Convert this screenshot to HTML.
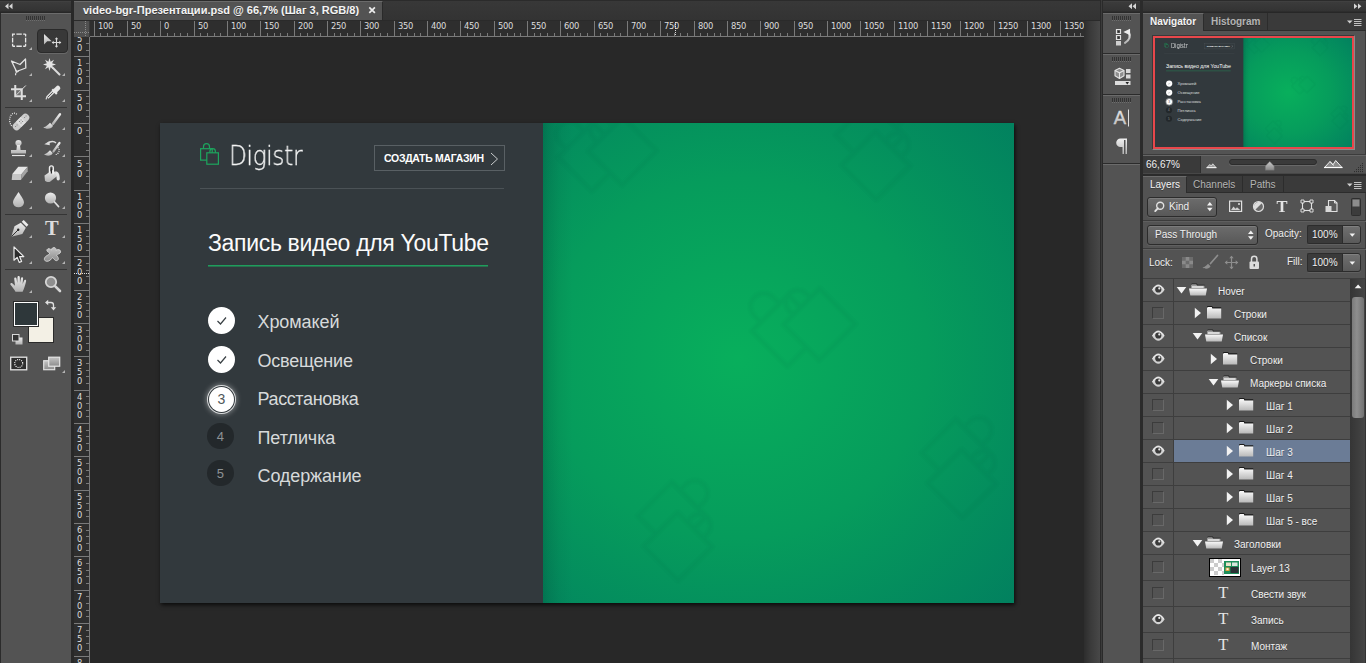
<!DOCTYPE html>
<html lang="ru">
<head>
<meta charset="utf-8">
<title>video-bgr-Презентации.psd @ 66,7% (Шаг 3, RGB/8)</title>
<style>
*{box-sizing:border-box;margin:0;padding:0}
html,body{width:1366px;height:663px;overflow:hidden;background:#282828}
body{position:relative;font-family:"Liberation Sans",sans-serif;font-size:11px;color:#ececec}
svg{display:block}
.a{position:absolute}
/* ---------- doc frame ---------- */
#gapL{position:absolute;left:71px;top:0;width:3px;height:663px;background:#282828}
#tabbar{position:absolute;left:74px;top:0;width:1026px;height:21px;background:linear-gradient(#383838,#333);border-top:1px solid #2b2b2b;border-bottom:1px solid #2a2a2a}
#tab{position:absolute;left:0;top:0;width:309px;height:19px;background:#535353;border-right:1px solid #2a2a2a;border-top:1px solid #6a6a6a}
#tab span{position:absolute;left:9px;top:1px;font:bold 11px/15px "Liberation Sans",sans-serif;color:#f4f4f4;white-space:nowrap;text-shadow:0 1px 0 rgba(0,0,0,.35)}
#tab i{position:absolute;left:294px;top:4px;width:9px;height:9px}
#hruler{position:absolute;left:90px;top:21px;width:994px;height:16px;background:#2e2e2e;overflow:hidden}
#vruler{position:absolute;left:74px;top:37px;width:16px;height:626px;background:#2e2e2e;overflow:hidden}
#corner{position:absolute;left:74px;top:21px;width:16px;height:16px;background:#505050;border-right:1px solid #3a3a3a}
#hruler text,#vruler text{font:9.3px "DejaVu Sans Condensed","Liberation Sans",sans-serif;fill:#dcdcdc;letter-spacing:-.3px}
#canvas{position:absolute;left:90px;top:37px;width:994px;height:626px;background:#282828;overflow:hidden}
#vscroll{position:absolute;left:1084px;top:21px;width:16px;height:642px;background:linear-gradient(90deg,#2d2d2d,#3a3a3a 40%,#484848)}
#gapR{position:absolute;left:1100px;top:0;width:3px;height:663px;background:linear-gradient(90deg,#2a2a2a 0 1px,#3b3b3b 1px 2px,#2a2a2a 2px 3px)}

/* ---------- left toolbar ---------- */
#tools{position:absolute;left:0;top:0;width:71px;height:663px;background:#535353;border-left:1px solid #2b2b2b}
#tools .hd{position:absolute;left:-1px;top:0;width:71px;height:13px;background:linear-gradient(#454545 0,#3b3b3b 1px,#333 10px,#272727 11px);border-top:1px solid #2b2b2b}
#tools .hl{position:absolute;left:0;top:13px;width:70px;height:1px;background:#6b6b6b}
#tools .sel{position:absolute;left:36px;top:29px;width:31px;height:24px;border-radius:4px;background:#383838;border:1px solid #2a2a2a;box-shadow:0 1px 0 #686868}
#tools .sep{position:absolute;left:4px;width:62px;height:1px;background:#353535}
#tools svg{position:absolute;left:-1px;top:0}
#tools .fg{position:absolute;left:12px;top:301px;width:26px;height:26px;border:1px solid #2b2b2b;background:#fff;padding:1px}
#tools .fg i{display:block;width:22px;height:22px;background:#2e373a;margin:0}
#tools .bg{position:absolute;left:27px;top:317px;width:26px;height:26px;border:1px solid #2b2b2b;background:#f3f0e5}

/* ---------- right icon strip ---------- */
#strip{position:absolute;left:1103px;top:0;width:37px;height:663px;background:#535353}
.dhd{position:absolute;left:0;top:0;width:100%;height:13px;background:linear-gradient(#454545 0,#3b3b3b 1px,#333 10px,#272727 11px);border-top:1px solid #2b2b2b}
#strip .g{position:absolute;left:0;width:37px;border-top:1px solid #6b6b6b;border-bottom:1px solid #2b2b2b;background:#535353}
#strip svg{position:absolute;left:0;top:0}
#gapR2{position:absolute;left:1140px;top:0;width:3px;height:663px;background:#2b2b2b}
/* ---------- right panels ---------- */
#rp{position:absolute;left:1143px;top:0;width:223px;height:663px;background:#535353;box-shadow:inset -1px 0 0 #3a3a3a;font:10px/12px "Liberation Sans",sans-serif;color:#f0f0f0}
#rp .t{position:absolute;white-space:nowrap;text-shadow:0 1px 0 rgba(0,0,0,.3)}
#rp .tabs{position:absolute;left:0;width:223px;height:18px;background:#3a3a3a;border-bottom:1px solid #2c2c2c}
#rp .tab{position:absolute;top:0;height:17px;border-right:1px solid #2c2c2c;font-weight:bold;color:#b4b4b4;padding:3px 0 0 7px;white-space:nowrap;text-shadow:0 1px 0 rgba(0,0,0,.3)}
#rp .tab.on{background:#535353;height:18px;color:#f4f4f4;border-top:1px solid #6b6b6b;padding-top:2px}
#rp .dd{position:absolute;border:1px solid #2c2c2c;border-radius:3px;background:linear-gradient(#6c6c6c,#585858);box-shadow:inset 0 1px 0 #7c7c7c,0 1px 0 #606060}
#rp .fld{position:absolute;background:#3a3a3a;border:1px solid #2c2c2c;border-right:0;border-radius:2px 0 0 2px;box-shadow:0 1px 0 #606060}
#rp .fbtn{position:absolute;border:1px solid #2c2c2c;border-radius:0 3px 3px 0;background:linear-gradient(#707070,#5a5a5a);box-shadow:inset 0 1px 0 #808080,0 1px 0 #606060}
#rp .ln{position:absolute;left:0;width:223px;height:2px;border-top:1px solid #3c3c3c;border-bottom:1px solid #5f5f5f}
#rp svg.ov{position:absolute;left:0;top:0}
#lay{position:absolute;left:0;top:278px;width:208px;height:385px;overflow:hidden}
#lay .r{position:absolute;left:0;width:208px;border-top:1px solid #3e3e3e}
#lay .r.s:before{content:"";position:absolute;left:31px;right:0;top:0;bottom:0;background:#6b7c96}
#lay .ec{position:absolute;left:30px;top:0;width:1px;height:385px;background:#3e3e3e}
#lay .cb{position:absolute;left:9px;width:12px;height:12px;border:1px solid #3c3c3c;border-right-color:#686868;border-bottom-color:#686868}
#lay .nm{position:absolute;white-space:nowrap;text-shadow:0 1px 0 rgba(0,0,0,.3)}
#lsb{position:absolute;left:207px;top:278px;width:16px;height:385px;background:linear-gradient(90deg,#353535,#454545);border-right:1px solid #333;border-top:1px solid #3e3e3e}
#lsb i{position:absolute;left:2px;top:18px;width:12px;height:121px;border-radius:3px;background:linear-gradient(90deg,#7a7a7a,#8e8e8e 40%,#727272)}
/* navigator */
#nav{position:absolute;left:9px;top:35px;width:203px;height:115px;background:#e8474b;border:1px solid #3a3a3a;border-right-color:#8a8a8a;border-bottom-color:#8a8a8a;box-shadow:0 0 0 0 #000}
#nav .vp{position:absolute;left:2px;top:2px;width:197px;height:109px;overflow:hidden;background:#32393d}
#nav .vp .doc{left:0;top:0;transform:scale(.2307);transform-origin:0 0;box-shadow:none}

/* ---------- document ---------- */
.doc{position:absolute;left:70px;top:86px;width:854px;height:480px;background:#32393d;box-shadow:1px 2px 4px rgba(0,0,0,.75);font-family:"Liberation Sans",sans-serif}
.green{position:absolute;left:383px;top:0;width:471px;height:480px;background:linear-gradient(90deg,rgba(0,50,40,.24),rgba(0,50,40,.15) 6px,rgba(0,50,40,.06) 16px,rgba(0,50,40,0) 30px),radial-gradient(ellipse 380px 360px at 195px 235px,#08af5c 0%,#069c5c 50%,#02805f 100%)}

.doc .logo{position:absolute;left:38px;top:18px}
.doc .brand{position:absolute;left:69.3px;top:12.7px;font:200 26.5px/40px "DejaVu Sans Light","DejaVu Sans","Liberation Sans",sans-serif;color:#f4f5f5;white-space:nowrap;transform-origin:0 50%;transform:scaleX(.872);will-change:transform;letter-spacing:-.3px;-webkit-text-stroke:.3px #f4f5f5}
.doc .btn{position:absolute;left:214px;top:22px;width:131px;height:26px;border:1px solid #596064;color:#fff;font:bold 10.5px/24px "Liberation Sans",sans-serif;padding-left:9px;white-space:nowrap;letter-spacing:-.3px}
.doc .btn svg{position:absolute;left:115px;top:6px}
.doc .hr{position:absolute;left:40px;top:65px;width:304px;height:1px;background:#4b5256}
.doc h1{position:absolute;left:48px;top:104.5px;font:normal 23px/30px "Liberation Sans",sans-serif;color:#fbfbfb;white-space:nowrap;letter-spacing:-.32px}
.doc .ul{position:absolute;left:48px;top:142px;width:280px;height:2px;background:linear-gradient(#1f9d5c 0 1px,rgba(31,157,92,.55) 1px 2px)}
.doc .mk{position:absolute;width:27px;height:27px;border-radius:50%;background:#fff;font:normal 14px/27px "Liberation Sans",sans-serif;color:#50575b;text-align:center}
.doc .mk.d{background:#23282b;color:#8d9295;font-size:13px;width:26.6px;height:26.6px}
.doc .mk.g{width:25px;height:25px;margin:1px;line-height:25px;box-shadow:0 0 0 1px #32393d,0 0 0 2px #d8dadb,0 0 5px 3px rgba(255,255,255,.35)}
.doc .lt{position:absolute;left:97.5px;font:normal 18px/27px "Liberation Sans",sans-serif;color:#d7dadb;white-space:nowrap}
.green svg{position:absolute;left:0;top:0}

</style>
</head>
<body>
<div id="tools">
<div class="hd"></div><div class="hl"></div>
<div class="sel"></div>
<div class="sep" style="top:107px"></div><div class="sep" style="top:214px"></div><div class="sep" style="top:269px"></div>
<div class="bg"></div><div class="fg"><i></i></div>
<svg width="72" height="380" viewBox="0 0 72 380">
<defs>
<linearGradient id="ig" x1="0" y1="0" x2="0" y2="1"><stop offset="0" stop-color="#ececec"/><stop offset="1" stop-color="#b2b2b2"/></linearGradient>
<linearGradient id="ig2" x1="0" y1="0" x2="0" y2="1"><stop offset="0" stop-color="#c4c4c4"/><stop offset="1" stop-color="#8c8c8c"/></linearGradient>
</defs>
<!-- collapse arrows -->
<path d="M8.5 3.2v6L5 6.2zM12.5 3.2v6L9 6.2z" fill="#d6d6d6"/>
<!-- grip -->
<path d="M26.5 16v4M28.5 16v4M30.5 16v4M32.5 16v4M34.5 16v4M36.5 16v4M38.5 16v4M40.5 16v4M42.5 16v4M44.5 16v4" stroke="#333" stroke-width="1"/>
<path d="M26 20.5h19" stroke="#6e6e6e" stroke-width="1" stroke-dasharray="1 1"/>
<!-- corner triangles -->
<path d="M32 47v3h-3z" fill="#b4b4b4"/><path d="M32 73v3h-3z" fill="#b4b4b4"/><path d="M65 73v3h-3z" fill="#b4b4b4"/><path d="M32 99v3h-3z" fill="#b4b4b4"/><path d="M65 99v3h-3z" fill="#b4b4b4"/>
<path d="M32 127v3h-3z" fill="#b4b4b4"/><path d="M65 127v3h-3z" fill="#b4b4b4"/><path d="M32 154v3h-3z" fill="#b4b4b4"/><path d="M65 154v3h-3z" fill="#b4b4b4"/>
<path d="M32 180v3h-3z" fill="#b4b4b4"/><path d="M65 180v3h-3z" fill="#b4b4b4"/><path d="M32 206v3h-3z" fill="#b4b4b4"/><path d="M65 206v3h-3z" fill="#b4b4b4"/>
<path d="M32 235v3h-3z" fill="#b4b4b4"/><path d="M65 235v3h-3z" fill="#b4b4b4"/><path d="M32 261v3h-3z" fill="#b4b4b4"/><path d="M65 261v3h-3z" fill="#b4b4b4"/>
<path d="M32 290v3h-3z" fill="#b4b4b4"/><path d="M65 370v3h-3z" fill="#b4b4b4"/>
<!-- marquee -->
<rect x="12.6" y="34.05" width="13" height="12.2" fill="none" stroke="#e8e8e8" stroke-width="1.3" stroke-dasharray="2.4 1.4 5.4 1.4 2.400 0 2.400 1.400 4.600 1.400 2.400 0"/>
<!-- move -->
<path d="M44 34v10.6l3.2-3.4h4.5z" fill="url(#ig)"/>
<path d="M56.500 38v9M52 42.500h9" stroke="#d8d8d8" stroke-width="1.100" fill="none"/>
<path d="M54.800 39.200l1.700-2 1.700 2zM54.800 45.800l1.700 2 1.700-2zM53.700 40.800l-2 1.700 2 1.700zM59.300 40.800l2 1.700-2 1.700z" fill="#d8d8d8"/>
<!-- polygonal lasso -->
<path d="M11.5 61l8.5 3.5 5.5-5.5.3 9-9.3 3.5z" fill="none" stroke="#e2e2e2" stroke-width="1.3" stroke-linejoin="round"/>
<path d="M18.5 70.2a1.4 1.4 0 1 1-2.6-.4M17 71.3c-1 1.6-2 2.6-1.3 4" fill="none" stroke="#e2e2e2" stroke-width="1.1"/>
<!-- magic wand -->
<path d="M49.5 58l1.1 3.8 3.4-2-1.9 3.5 3.9 1.2-3.9 1.2 1.9 3.5-3.4-2-1.1 3.8-1.100-3.8-3.4 2 1.900-3.5-3.900-1.200 3.900-1.200-1.900-3.500 3.400 2z" fill="#e4e4e4"/>
<path d="M52.500 67.500l7 7" stroke="#dcdcdc" stroke-width="2" stroke-linecap="round"/>
<!-- crop -->
<rect x="16.500" y="90.500" width="4.500" height="4.500" fill="#707070"/>
<path d="M15.250 85v11.250H26M11 89.250h10.750V100" fill="none" stroke="#dedede" stroke-width="2"/>
<path d="M16.500 94.800l9.300-9.300" stroke="#dedede" stroke-width="1"/>
<!-- eyedropper -->
<path d="M46.100 99.400l.8-2.600" stroke="#dcdcdc" stroke-width="1.200"/><path d="M47.300 97.700l6.700-6.700" stroke="#dcdcdc" stroke-width="3.200"/><path d="M47.600 97.400l5.200-5.200" stroke="#4a4a4a" stroke-width=".9"/>
<path d="M52.300 89.300l4.600 4.600" stroke="#e8e8e8" stroke-width="2.200"/><path d="M55.600 90.400l2.300-2.300" stroke="#e8e8e8" stroke-width="4.800" stroke-linecap="round"/>
<!-- healing brush -->
<rect x="11" y="118.200" width="20" height="7.600" rx="3.600" transform="rotate(-45 21 122)" fill="#cdcdcd"/>
<rect x="17.700" y="118.200" width="6.600" height="7.600" transform="rotate(-45 21 122)" fill="#dedede"/>
<path d="M19.500 121.500h.1M21 120h.1M22.500 121.500h.1M21 123h.1M24.500 117.500h.1M26 116h.1M15.500 126.500h.1M17 125h.1" stroke="#8a8a8a" stroke-width="1" stroke-linecap="square"/>
<path d="M16.800 114.300a4.200 6.300 0 0 0-5 11.700" fill="none" stroke="#f0f0f0" stroke-width="1.200" stroke-dasharray="1 1.100"/>
<!-- brush -->
<path d="M60 114.300l-7 9.500" stroke="url(#ig)" stroke-width="2.400" stroke-linecap="round"/>
<path d="M43.300 127.300c3-.3 4.700-2.800 6.700-4.500l3 3c-.9 3.200-6.600 4-9.700 1.500z" fill="url(#ig)"/>
<!-- stamp -->
<circle cx="18.500" cy="143" r="3.100" fill="url(#ig)"/><path d="M17 145h3l.6 5h5.400v3.600H11V150h5.400z" fill="url(#ig)"/><path d="M12 155.500h13" stroke="#e6e6e6" stroke-width="1.200"/>
<!-- history brush -->
<path d="M59.500 143l-6 8.300" stroke="url(#ig)" stroke-width="2.200" stroke-linecap="round"/>
<path d="M44 154.300c2.700-.3 4.200-2.500 6-4l2.700 2.700c-.8 2.900-5.900 3.600-8.700 1.300z" fill="url(#ig)"/>
<path d="M48 143.300c2.500-2.200 6-2.300 8-.3" fill="none" stroke="#dcdcdc" stroke-width="1.500"/><path d="M44.300 144.300l5.200-3.300.3 4.300z" fill="#dcdcdc"/>
<path d="M57.800 147.500a4 4 0 0 1-2.300 7" fill="none" stroke="#f0f0f0" stroke-width="1.200" stroke-dasharray="1 1"/>
<!-- eraser -->
<path d="M18.300 166.700h9.400l-6 7.300h-9.400z" fill="#e6e6e6"/><path d="M12.300 174h9.400l-.8 6h-9.200z" fill="#c6c6c6"/><path d="M21.700 174l6-7.300v4.500l-6.800 8.800z" fill="#a4a4a4"/>
<!-- bucket -->
<path d="M44.500 175.500l8-5.500 6 5-8.500 6.800c-1.500.5-3.800.2-5-1z" fill="url(#ig)"/>
<path d="M49.500 173v-5.200a1.900 1.900 0 0 1 3.800 0v6.500" fill="none" stroke="#efefef" stroke-width="1.400"/><path d="M51.400 168.500v5" stroke="#2c2c2c" stroke-width="1.200"/>
<path d="M54.500 171.800c3.200-1 5.200 1 5.300 7a1.600 1.600 0 0 1-3.200 0c0-3-.3-5.500-2.100-7z" fill="#e2e2e2"/>
<!-- blur -->
<path d="M18.500 192c1.500 2.700 5.500 7.200 5.500 10.500a5.500 4.800 0 0 1-11 0c0-3.300 4-7.800 5.500-10.500z" fill="url(#ig)"/>
<!-- dodge -->
<circle cx="50.500" cy="198" r="5.600" fill="url(#ig)"/><path d="M54.500 202l4 4.500" stroke="#e0e0e0" stroke-width="1.800" stroke-linecap="round"/>
<!-- pen -->
<path d="M11.300 236.700l3.200-10.400 6.300-3.500 5 5-3.500 6.300z" fill="url(#ig)"/><path d="M21.700 221.800l2-1.800 4.700 4.700-1.800 2z" fill="#ececec"/>
<path d="M11.500 236.500l6.500-6.500" stroke="#333" stroke-width="1"/><circle cx="18.200" cy="229.800" r="1.200" fill="#222"/>
<!-- type -->
<text x="45" y="235.200" font-family="Liberation Serif,serif" font-size="20.500" font-weight="bold" fill="#dcdcdc">T</text>
<!-- path select -->
<path d="M14 246.800v13.400l3.200-2.800 2 5 2.400-1-2-4.800h4.200z" fill="#2b2b2b" stroke="#ececec" stroke-width="1.200" stroke-linejoin="round"/>
<!-- custom shape -->
<path d="M52.500 248c2-1.500 4 .3 3.300 2.300 1.800-1.300 5-.8 4.800 1.500-.2 2-3 2.200-4.300 3.200 1.300 1.300 3 3.800 1.300 5.200-2 1.500-3.500-1.200-5-2.500-1.500 1.300-3.500 4.300-6.500 3.500-2.800-1-1.800-3.800 0-5 1.800-1.300 3.300-1.800 3.700-3.200-1.300-.8-3.500-1.500-2.800-3.300.8-1.800 3.300-.8 4.500.3.200-.8.200-1.500 1-2z" fill="url(#ig2)" stroke="#d2d2d2" stroke-width="1"/>
<!-- hand -->
<path d="M15.500 291.800c-1.500-2.500-3.500-5.500-5-7-.8-1.300.8-2.300 2-1.300l2.500 2.300-.8-7c0-1.500 2-1.700 2.300-.2l.8 4.500.2-6c0-1.500 2.200-1.500 2.300 0l.2 6 1-5c.3-1.300 2.200-1 2.100.4l-.5 5.400 1.500-3.400c.6-1.200 2.300-.6 2 .7-.8 3.800-2 7.500-3.500 10.600z" fill="url(#ig)"/>
<!-- zoom -->
<circle cx="51" cy="282" r="5.200" fill="#8f8f8f" stroke="#d6d6d6" stroke-width="1.800"/><path d="M55.300 286.300l4.700 4.700" stroke="#d6d6d6" stroke-width="2.600" stroke-linecap="round"/>
<!-- swap -->
<path d="M47.500 302.500h3.500a2.500 2.500 0 0 1 2.500 2.500v3" fill="none" stroke="#e0e0e0" stroke-width="1.300"/><path d="M45 302.500l3.200-2.700v5.400zM53.500 310.500l-2.700-3.200h5.400z" fill="#e0e0e0"/>
<!-- default colours -->
<rect x="15.500" y="337.500" width="7" height="7" fill="url(#ig)"/><rect x="12.500" y="334.500" width="6.500" height="6.500" fill="#333" stroke="#d8d8d8" stroke-width="1"/>
<!-- quick mask -->
<rect x="10.700" y="357.200" width="16" height="12.600" fill="#2e2e2e" stroke="#e4e4e4" stroke-width="1.300"/><circle cx="18.700" cy="363.500" r="4" fill="none" stroke="#fff" stroke-width="1.200" stroke-dasharray="1 1.100"/>
<!-- screen mode -->
<rect x="43.700" y="360.700" width="11" height="9" fill="url(#ig2)" stroke="#e0e0e0" stroke-width="1.200"/><rect x="48.700" y="357.200" width="11" height="9" fill="url(#ig2)" stroke="#e6e6e6" stroke-width="1.200"/>
</svg>
</div>

<div id="gapL"></div>
<div id="tabbar"><div id="tab"><span>video-bgr-Презентации.psd @ 66,7% (Шаг 3, RGB/8)</span><i><svg width="9" height="9" viewBox="0 0 9 9"><path d="M1.300 1.300l5.600 5.600M6.900 1.300l-5.600 5.600" stroke="#ececec" stroke-width="1.700" fill="none"/></svg></i></div></div>
<div id="hruler"><svg width="994" height="16" viewBox="0 0 994 16"><text x="-26" y="8.2">150</text><text x="8" y="8.2">100</text><text x="41" y="8.2">50</text><text x="74" y="8.2">0</text><text x="108" y="8.2">50</text><text x="141" y="8.2">100</text><text x="174" y="8.2">150</text><text x="208" y="8.2">200</text><text x="241" y="8.2">250</text><text x="274" y="8.2">300</text><text x="308" y="8.2">350</text><text x="341" y="8.2">400</text><text x="374" y="8.2">450</text><text x="408" y="8.2">500</text><text x="441" y="8.2">550</text><text x="474" y="8.2">600</text><text x="508" y="8.2">650</text><text x="541" y="8.2">700</text><text x="574" y="8.2">750</text><text x="608" y="8.2">800</text><text x="641" y="8.2">850</text><text x="674" y="8.2">900</text><text x="708" y="8.2">950</text><text x="741" y="8.2">1000</text><text x="774" y="8.2">1050</text><text x="808" y="8.2">1100</text><text x="841" y="8.2">1150</text><text x="874" y="8.2">1200</text><text x="908" y="8.2">1250</text><text x="941" y="8.2">1300</text><text x="974" y="8.2">1350</text><path d="M4.5 0V15M10.5 12V15M17.5 12V15M24.5 12V15M30.5 12V15M37.5 0V15M44.5 12V15M50.5 12V15M57.5 12V15M64.5 12V15M70.5 0V15M77.5 12V15M84.5 12V15M90.5 12V15M97.5 12V15M104.5 0V15M110.5 12V15M117.5 12V15M124.5 12V15M130.5 12V15M137.5 0V15M144.5 12V15M150.5 12V15M157.5 12V15M164.5 12V15M170.5 0V15M177.5 12V15M184.5 12V15M190.5 12V15M197.5 12V15M204.5 0V15M210.5 12V15M217.5 12V15M224.5 12V15M230.5 12V15M237.5 0V15M244.5 12V15M250.5 12V15M257.5 12V15M264.5 12V15M270.5 0V15M277.5 12V15M284.5 12V15M290.5 12V15M297.5 12V15M304.5 0V15M310.5 12V15M317.5 12V15M324.5 12V15M330.5 12V15M337.5 0V15M344.5 12V15M350.5 12V15M357.5 12V15M364.5 12V15M370.5 0V15M377.5 12V15M384.5 12V15M390.5 12V15M397.5 12V15M404.5 0V15M410.5 12V15M417.5 12V15M424.5 12V15M430.5 12V15M437.5 0V15M444.5 12V15M450.5 12V15M457.5 12V15M464.5 12V15M470.5 0V15M477.5 12V15M484.5 12V15M490.5 12V15M497.5 12V15M504.5 0V15M510.5 12V15M517.5 12V15M524.5 12V15M530.5 12V15M537.5 0V15M544.5 12V15M550.5 12V15M557.5 12V15M564.5 12V15M570.5 0V15M577.5 12V15M584.5 12V15M590.5 12V15M597.5 12V15M604.5 0V15M610.5 12V15M617.5 12V15M624.5 12V15M630.5 12V15M637.5 0V15M644.5 12V15M650.5 12V15M657.5 12V15M664.5 12V15M670.5 0V15M677.5 12V15M684.5 12V15M690.5 12V15M697.5 12V15M704.5 0V15M710.5 12V15M717.5 12V15M724.5 12V15M730.5 12V15M737.5 0V15M744.5 12V15M750.5 12V15M757.5 12V15M764.5 12V15M770.5 0V15M777.5 12V15M784.5 12V15M790.5 12V15M797.5 12V15M804.5 0V15M810.5 12V15M817.5 12V15M824.5 12V15M830.5 12V15M837.5 0V15M844.5 12V15M850.5 12V15M857.5 12V15M864.5 12V15M870.5 0V15M877.5 12V15M884.5 12V15M890.5 12V15M897.5 12V15M904.5 0V15M910.5 12V15M917.5 12V15M924.5 12V15M930.5 12V15M937.5 0V15M944.5 12V15M950.5 12V15M957.5 12V15M964.5 12V15M970.5 0V15M977.5 12V15M984.5 12V15M990.5 12V15M0 15.5H994" stroke="#7a7a7a" stroke-width="1" fill="none"/><path d="M585.5 1V15" stroke="#e0e0e0" stroke-width="1" stroke-dasharray="1 1"/></svg></div>
<div id="vruler"><svg width="16" height="626" viewBox="0 0 16 626"><text x="5.6" y="-4" text-anchor="middle">1</text><text x="5.6" y="5" text-anchor="middle">5</text><text x="5.6" y="14" text-anchor="middle">0</text><text x="5.6" y="29" text-anchor="middle">1</text><text x="5.6" y="38" text-anchor="middle">0</text><text x="5.6" y="47" text-anchor="middle">0</text><text x="5.6" y="64" text-anchor="middle">5</text><text x="5.6" y="74" text-anchor="middle">0</text><text x="5.6" y="97" text-anchor="middle">0</text><text x="5.6" y="130" text-anchor="middle">5</text><text x="5.6" y="140" text-anchor="middle">0</text><text x="5.6" y="163" text-anchor="middle">1</text><text x="5.6" y="172" text-anchor="middle">0</text><text x="5.6" y="181" text-anchor="middle">0</text><text x="5.6" y="196" text-anchor="middle">1</text><text x="5.6" y="205" text-anchor="middle">5</text><text x="5.6" y="214" text-anchor="middle">0</text><text x="5.6" y="229" text-anchor="middle">2</text><text x="5.6" y="238" text-anchor="middle">0</text><text x="5.6" y="247" text-anchor="middle">0</text><text x="5.6" y="263" text-anchor="middle">2</text><text x="5.6" y="272" text-anchor="middle">5</text><text x="5.6" y="281" text-anchor="middle">0</text><text x="5.6" y="296" text-anchor="middle">3</text><text x="5.6" y="305" text-anchor="middle">0</text><text x="5.6" y="314" text-anchor="middle">0</text><text x="5.6" y="329" text-anchor="middle">3</text><text x="5.6" y="338" text-anchor="middle">5</text><text x="5.6" y="347" text-anchor="middle">0</text><text x="5.6" y="363" text-anchor="middle">4</text><text x="5.6" y="372" text-anchor="middle">0</text><text x="5.6" y="381" text-anchor="middle">0</text><text x="5.6" y="396" text-anchor="middle">4</text><text x="5.6" y="405" text-anchor="middle">5</text><text x="5.6" y="414" text-anchor="middle">0</text><text x="5.6" y="429" text-anchor="middle">5</text><text x="5.6" y="438" text-anchor="middle">0</text><text x="5.6" y="447" text-anchor="middle">0</text><text x="5.6" y="463" text-anchor="middle">5</text><text x="5.6" y="472" text-anchor="middle">5</text><text x="5.6" y="481" text-anchor="middle">0</text><text x="5.6" y="496" text-anchor="middle">6</text><text x="5.6" y="505" text-anchor="middle">0</text><text x="5.6" y="514" text-anchor="middle">0</text><text x="5.6" y="529" text-anchor="middle">6</text><text x="5.6" y="538" text-anchor="middle">5</text><text x="5.6" y="547" text-anchor="middle">0</text><text x="5.6" y="563" text-anchor="middle">7</text><text x="5.6" y="572" text-anchor="middle">0</text><text x="5.6" y="581" text-anchor="middle">0</text><text x="5.6" y="596" text-anchor="middle">7</text><text x="5.6" y="605" text-anchor="middle">5</text><text x="5.6" y="614" text-anchor="middle">0</text><text x="5.6" y="629" text-anchor="middle">8</text><text x="5.6" y="638" text-anchor="middle">0</text><text x="5.6" y="647" text-anchor="middle">0</text><path d="M12 6.5H15M12 13.5H15M0 19.5H15M12 26.5H15M12 33.5H15M12 39.5H15M12 46.5H15M0 53.5H15M12 59.5H15M12 66.5H15M12 73.5H15M12 79.5H15M0 86.5H15M12 93.5H15M12 99.5H15M12 106.5H15M12 113.5H15M0 119.5H15M12 126.5H15M12 133.5H15M12 139.5H15M12 146.5H15M0 153.5H15M12 159.5H15M12 166.5H15M12 173.5H15M12 179.5H15M0 186.5H15M12 193.5H15M12 199.5H15M12 206.5H15M12 213.5H15M0 219.5H15M12 226.5H15M12 233.5H15M12 239.5H15M12 246.5H15M0 253.5H15M12 259.5H15M12 266.5H15M12 273.5H15M12 279.5H15M0 286.5H15M12 293.5H15M12 299.5H15M12 306.5H15M12 313.5H15M0 319.5H15M12 326.5H15M12 333.5H15M12 339.5H15M12 346.5H15M0 353.5H15M12 359.5H15M12 366.5H15M12 373.5H15M12 379.5H15M0 386.5H15M12 393.5H15M12 399.5H15M12 406.5H15M12 413.5H15M0 419.5H15M12 426.5H15M12 433.5H15M12 439.5H15M12 446.5H15M0 453.5H15M12 459.5H15M12 466.5H15M12 473.5H15M12 479.5H15M0 486.5H15M12 493.5H15M12 499.5H15M12 506.5H15M12 513.5H15M0 519.5H15M12 526.5H15M12 533.5H15M12 539.5H15M12 546.5H15M0 553.5H15M12 559.5H15M12 566.5H15M12 573.5H15M12 579.5H15M0 586.5H15M12 593.5H15M12 599.5H15M12 606.5H15M12 613.5H15M0 619.5H15M15.5 0V626" stroke="#7a7a7a" stroke-width="1" fill="none"/><path d="M0 236.5H15" stroke="#e0e0e0" stroke-width="1" stroke-dasharray="1 1"/></svg></div>
<div id="corner"><svg width="16" height="16" viewBox="0 0 16 16"><path d="M11.5 0V16M0 11.5H15" stroke="#8a8a8a" stroke-width="1" stroke-dasharray="1 1" fill="none"/></svg></div>
<div id="canvas">
  <div class="doc">
    <div class="green"><svg width="471" height="480" viewBox="0 0 471 480" fill="none" stroke="#0a5f45" stroke-width=".9" opacity=".065"><filter id="wb"><feGaussianBlur stdDeviation="1.3"/></filter><g filter="url(#wb)"><g transform="translate(59,23) rotate(-45) scale(4.2)"><path d="M-6.500 -5.500v-2a3 3 0 0 1 6 0v2"/><path d="M-3.200 5.900H-9.300V-5.500H2.300V-1.400"/><path d="M-.100 -1.400v-1.350a2.750 2.750 0 0 1 5.500 0v1.350"/><rect x="-3.200" y="-1.400" width="11.600" height="11.400"/></g><g transform="translate(338,22) rotate(45) scale(4.2)"><path d="M-6.500 -5.500v-2a3 3 0 0 1 6 0v2"/><path d="M-3.200 5.900H-9.300V-5.500H2.300V-1.400"/><path d="M-.100 -1.400v-1.350a2.750 2.750 0 0 1 5.500 0v1.350"/><rect x="-3.200" y="-1.400" width="11.600" height="11.400"/></g><g transform="translate(255,196) rotate(-45) scale(4.4)"><path d="M-6.500 -5.500v-2a3 3 0 0 1 6 0v2"/><path d="M-3.200 5.900H-9.300V-5.500H2.300V-1.400"/><path d="M-.100 -1.400v-1.350a2.750 2.750 0 0 1 5.500 0v1.350"/><rect x="-3.200" y="-1.400" width="11.600" height="11.400"/></g><g transform="translate(140,403) rotate(45) scale(4.2)"><path d="M-6.500 -5.500v-2a3 3 0 0 1 6 0v2"/><path d="M-3.200 5.900H-9.300V-5.500H2.300V-1.400"/><path d="M-.100 -1.400v-1.350a2.750 2.750 0 0 1 5.500 0v1.350"/><rect x="-3.200" y="-1.400" width="11.600" height="11.400"/></g><g transform="translate(424,340) rotate(45) scale(4.2)"><path d="M-6.500 -5.500v-2a3 3 0 0 1 6 0v2"/><path d="M-3.200 5.900H-9.300V-5.500H2.300V-1.400"/><path d="M-.100 -1.400v-1.350a2.750 2.750 0 0 1 5.500 0v1.350"/><rect x="-3.200" y="-1.400" width="11.600" height="11.400"/></g></g></svg></div>
    <svg class="logo" width="24" height="26" viewBox="0 0 24 26" fill="none" stroke="#1da55e" stroke-width="1.2">
      <path d="M5.5 7.7V5.7a3 3 0 0 1 6 0v2"/><rect x="2.6" y="7.7" width="11.6" height="11.4"/>
      <rect x="8.8" y="11.8" width="11.6" height="11.4" fill="#32393d"/><path d="M11.9 11.8V10.45a2.75 2.75 0 0 1 5.5 0v1.35"/>
    </svg>
    <div class="brand">Digistr</div>
    <div class="btn">СОЗДАТЬ МАГАЗИН<svg width="9" height="14" viewBox="0 0 9 14" fill="none" stroke="#c9cccd" stroke-width="1"><path d="M1 1l6.5 6L1 13"/></svg></div>
    <div class="hr"></div>
    <h1>Запись видео для YouTube</h1>
    <div class="ul"></div>
    <b class="mk " style="left:48.0px;top:184.3px"><svg width="27" height="27" viewBox="0 0 27 27" fill="none" stroke="#3a4145" stroke-width="1.2"><path d="M9.5 14l3 3 5.5-6.5"/></svg></b><span class="lt" style="top:186.2px;letter-spacing:-0.08px">Хромакей</span>
    <b class="mk " style="left:48.0px;top:222.9px"><svg width="27" height="27" viewBox="0 0 27 27" fill="none" stroke="#3a4145" stroke-width="1.2"><path d="M9.5 14l3 3 5.5-6.5"/></svg></b><span class="lt" style="top:224.6px;letter-spacing:-0.2px">Освещение</span>
    <b class="mk g" style="left:48.0px;top:262.7px">3</b><span class="lt" style="top:263.1px;letter-spacing:-0.39px">Расстановка</span>
    <b class="mk d" style="left:47.1px;top:299.8px">4</b><span class="lt" style="top:301.6px;letter-spacing:-0.08px">Петличка</span>
    <b class="mk d" style="left:47.1px;top:336.6px">5</b><span class="lt" style="top:340.0px;letter-spacing:-0.12px">Содержание</span>
  </div>
</div>
<div id="vscroll"></div>
<div id="gapR"></div>
<div id="strip"><div class="dhd"></div>
<div class="g" style="top:13px;height:41px"></div><div class="g" style="top:54px;height:41px"></div><div class="g" style="top:95px;height:69px"></div><div class="g" style="top:164px;height:499px;border-bottom:0"></div>
<svg width="37" height="170" viewBox="1103 0 37 170">
<defs><linearGradient id="sg" x1="0" y1="0" x2="0" y2="1"><stop offset="0" stop-color="#f0f0f0"/><stop offset="1" stop-color="#b4b4b4"/></linearGradient></defs>
<path d="M1132 3.200v6l-3.500-3zM1136 3.200v6l-3.500-3z" fill="#d6d6d6"/>
<path d="M1112.5 16v4M1114.5 16v4M1116.5 16v4M1118.5 16v4M1120.5 16v4M1122.5 16v4M1124.5 16v4M1126.5 16v4M1128.5 16v4M1130.5 16v4" stroke="#333" stroke-width="1"/><path d="M1112 20.5h19" stroke="#6e6e6e" stroke-width="1" stroke-dasharray="1 1"/><path d="M1112.5 57v4M1114.5 57v4M1116.5 57v4M1118.5 57v4M1120.5 57v4M1122.5 57v4M1124.5 57v4M1126.5 57v4M1128.5 57v4M1130.5 57v4" stroke="#333" stroke-width="1"/><path d="M1112 61.5h19" stroke="#6e6e6e" stroke-width="1" stroke-dasharray="1 1"/><path d="M1112.5 98v4M1114.5 98v4M1116.5 98v4M1118.5 98v4M1120.5 98v4M1122.5 98v4M1124.5 98v4M1126.5 98v4M1128.5 98v4M1130.5 98v4" stroke="#333" stroke-width="1"/><path d="M1112 102.5h19" stroke="#6e6e6e" stroke-width="1" stroke-dasharray="1 1"/>
<!-- history -->
<path d="M1116.500 29.500h4v4h-4zM1116.500 35.500h4v4h-4z" fill="none" stroke="#e2e2e2" stroke-width="1.200"/><rect x="1118" y="31" width="1.500" height="1.500" fill="#2a2a2a"/><rect x="1118" y="37" width="1.500" height="1.500" fill="#2a2a2a"/><rect x="1116" y="41" width="5" height="4.500" fill="#cfcfcf"/>
<path d="M1125 42.800c4.500-2.500 5.800-6.500 3.600-11" fill="none" stroke="url(#sg)" stroke-width="2.100" stroke-linecap="round"/><path d="M1123.300 32l6.700-3.200.2 6.400z" fill="#ececec"/>
<!-- properties -->
<path d="M1119.500 68.300l4.500 2.200v5.300l-4.500 2.700-4.500-2.700v-5.300z" fill="#8e8e8e" stroke="#e4e4e4" stroke-width="1.100" stroke-linejoin="round"/><path d="M1115 70.500l4.500 2.300 4.500-2.300M1119.500 72.800v5.500" fill="none" stroke="#e4e4e4" stroke-width="1.100"/>
<rect x="1126" y="69" width="4.500" height="4" fill="#d8d8d8"/><rect x="1126" y="74.500" width="4.500" height="4" fill="#d8d8d8"/>
<rect x="1115" y="81" width="15.500" height="4" fill="#dcdcdc"/><path d="M1125.500 82l3.500 0-1.750 2.500z" fill="#222"/>
<!-- character -->
<text x="1113.800" y="124" font-family="Liberation Sans,sans-serif" font-size="18.500" fill="url(#sg)" stroke="#dcdcdc" stroke-width=".4">A</text><path d="M1128.500 109.500v17" stroke="#e0e0e0" stroke-width="1"/>
<!-- paragraph -->
<path d="M1127 138.500h-6.500a4.300 4.300 0 0 0 0 8.600h2v7h1.500v-14h1.500v14h1.500z" fill="url(#sg)"/>
</svg></div><div id="gapR2"></div>

<div id="rp"><div class="dhd"></div>
<div class="tabs" style="top:13px"><div class="tab on" style="left:0;width:61px">Navigator</div><div class="tab" style="left:61px;width:64px">Histogram</div></div>
<div id="nav"><div class="vp">  <div class="doc">
    <div class="green"><svg width="471" height="480" viewBox="0 0 471 480" fill="none" stroke="#0a5f45" stroke-width=".9" opacity=".065"><filter id="wb2"><feGaussianBlur stdDeviation="1.3"/></filter><g filter="url(#wb2)"><g transform="translate(59,23) rotate(-45) scale(4.2)"><path d="M-6.500 -5.500v-2a3 3 0 0 1 6 0v2"/><path d="M-3.200 5.900H-9.300V-5.500H2.300V-1.400"/><path d="M-.100 -1.400v-1.350a2.750 2.750 0 0 1 5.500 0v1.350"/><rect x="-3.200" y="-1.400" width="11.600" height="11.400"/></g><g transform="translate(338,22) rotate(45) scale(4.2)"><path d="M-6.500 -5.500v-2a3 3 0 0 1 6 0v2"/><path d="M-3.200 5.900H-9.300V-5.500H2.300V-1.400"/><path d="M-.100 -1.400v-1.350a2.750 2.750 0 0 1 5.500 0v1.350"/><rect x="-3.200" y="-1.400" width="11.600" height="11.400"/></g><g transform="translate(255,196) rotate(-45) scale(4.4)"><path d="M-6.500 -5.500v-2a3 3 0 0 1 6 0v2"/><path d="M-3.200 5.900H-9.300V-5.500H2.300V-1.400"/><path d="M-.100 -1.400v-1.350a2.750 2.750 0 0 1 5.500 0v1.350"/><rect x="-3.200" y="-1.400" width="11.600" height="11.400"/></g><g transform="translate(140,403) rotate(45) scale(4.2)"><path d="M-6.500 -5.500v-2a3 3 0 0 1 6 0v2"/><path d="M-3.200 5.900H-9.300V-5.500H2.300V-1.400"/><path d="M-.100 -1.400v-1.350a2.750 2.750 0 0 1 5.500 0v1.350"/><rect x="-3.200" y="-1.400" width="11.600" height="11.400"/></g><g transform="translate(424,340) rotate(45) scale(4.2)"><path d="M-6.500 -5.500v-2a3 3 0 0 1 6 0v2"/><path d="M-3.200 5.900H-9.300V-5.500H2.300V-1.400"/><path d="M-.100 -1.400v-1.350a2.750 2.750 0 0 1 5.500 0v1.350"/><rect x="-3.200" y="-1.400" width="11.600" height="11.400"/></g></g></svg></div>
    <svg class="logo" width="24" height="26" viewBox="0 0 24 26" fill="none" stroke="#1da55e" stroke-width="1.2">
      <path d="M5.5 7.7V5.7a3 3 0 0 1 6 0v2"/><rect x="2.6" y="7.7" width="11.6" height="11.4"/>
      <rect x="8.8" y="11.8" width="11.6" height="11.4" fill="#32393d"/><path d="M11.9 11.8V10.45a2.75 2.75 0 0 1 5.5 0v1.35"/>
    </svg>
    <div class="brand">Digistr</div>
    <div class="btn">СОЗДАТЬ МАГАЗИН<svg width="9" height="14" viewBox="0 0 9 14" fill="none" stroke="#c9cccd" stroke-width="1"><path d="M1 1l6.5 6L1 13"/></svg></div>
    <div class="hr"></div>
    <h1>Запись видео для YouTube</h1>
    <div class="ul"></div>
    <b class="mk " style="left:48.0px;top:184.3px"><svg width="27" height="27" viewBox="0 0 27 27" fill="none" stroke="#3a4145" stroke-width="1.2"><path d="M9.5 14l3 3 5.5-6.5"/></svg></b><span class="lt" style="top:186.2px;letter-spacing:-0.08px">Хромакей</span>
    <b class="mk " style="left:48.0px;top:222.9px"><svg width="27" height="27" viewBox="0 0 27 27" fill="none" stroke="#3a4145" stroke-width="1.2"><path d="M9.5 14l3 3 5.5-6.5"/></svg></b><span class="lt" style="top:224.6px;letter-spacing:-0.2px">Освещение</span>
    <b class="mk g" style="left:48.0px;top:262.7px">3</b><span class="lt" style="top:263.1px;letter-spacing:-0.39px">Расстановка</span>
    <b class="mk d" style="left:47.1px;top:299.8px">4</b><span class="lt" style="top:301.6px;letter-spacing:-0.08px">Петличка</span>
    <b class="mk d" style="left:47.1px;top:336.6px">5</b><span class="lt" style="top:340.0px;letter-spacing:-0.12px">Содержание</span>
  </div>
</div></div>
<div class="a" style="left:0;top:154px;width:223px;height:20px;border-top:1px solid #3c3c3c;background:#535353;box-shadow:inset 0 1px 0 #666"></div>
<div class="a" style="left:0;top:156px;width:58px;height:17px;background:#3a3a3a;border-right:1px solid #2e2e2e"></div>
<div class="t" style="left:3px;top:159px;font-size:10px">66,67%</div>
<div class="a" style="left:86px;top:159px;width:88px;height:6px;border-radius:3px;background:#3a3a3a;border:1px solid #2c2c2c;box-shadow:0 1px 0 #686868"></div>
<div class="a" style="left:0;top:173px;width:223px;height:3px;background:#2b2b2b;border-top:1px solid #474747"></div>
<div class="tabs" style="top:176px;height:17px;font-weight:normal"><div class="tab on" style="left:0;width:44px;height:17px;font-weight:normal">Layers</div><div class="tab" style="left:44px;width:56px;height:16px;font-weight:normal;padding-left:6px">Channels</div><div class="tab" style="left:100px;width:41px;height:16px;font-weight:normal">Paths</div></div>
<div class="dd" style="left:4px;top:197px;width:70px;height:20px"></div><div class="t" style="left:26px;top:201px">Kind</div>
<div class="ln" style="top:220px"></div>
<div class="dd" style="left:4px;top:225px;width:111px;height:20px"></div><div class="t" style="left:12px;top:229px">Pass Through</div>
<div class="t" style="left:122px;top:228px">Opacity:</div><div class="fld" style="left:164px;top:225px;width:36px;height:19px"></div><div class="t" style="left:169px;top:229px">100%</div><div class="fbtn" style="left:199px;top:225px;width:19px;height:19px"></div>
<div class="ln" style="top:248px"></div>
<div class="t" style="left:6px;top:257px">Lock:</div>
<div class="t" style="left:144px;top:256px">Fill:</div><div class="fld" style="left:164px;top:253px;width:36px;height:19px"></div><div class="t" style="left:169px;top:257px">100%</div><div class="fbtn" style="left:199px;top:253px;width:19px;height:19px"></div>
<div id="lay">
<div class="r" style="top:0px;height:23px"></div>
<div class="nm" style="left:75px;top:7.5px">Hover</div>
<div class="r" style="top:23px;height:23px"></div>
<div class="cb" style="top:29px"></div>
<div class="nm" style="left:91px;top:30.5px">Строки</div>
<div class="r" style="top:46px;height:23px"></div>
<div class="nm" style="left:91px;top:53.5px">Список</div>
<div class="r" style="top:69px;height:23px"></div>
<div class="nm" style="left:107px;top:76.5px">Строки</div>
<div class="r" style="top:92px;height:23px"></div>
<div class="nm" style="left:107px;top:99.5px">Маркеры списка</div>
<div class="r" style="top:115px;height:23px"></div>
<div class="cb" style="top:121px"></div>
<div class="nm" style="left:123px;top:122.5px">Шаг 1</div>
<div class="r" style="top:138px;height:23px"></div>
<div class="cb" style="top:144px"></div>
<div class="nm" style="left:123px;top:145.5px">Шаг 2</div>
<div class="r s" style="top:161px;height:23px"></div>
<div class="nm" style="left:123px;top:168.5px">Шаг 3</div>
<div class="r" style="top:184px;height:23px"></div>
<div class="cb" style="top:190px"></div>
<div class="nm" style="left:123px;top:191.5px">Шаг 4</div>
<div class="r" style="top:207px;height:23px"></div>
<div class="cb" style="top:213px"></div>
<div class="nm" style="left:123px;top:214.5px">Шаг 5</div>
<div class="r" style="top:230px;height:23px"></div>
<div class="cb" style="top:236px"></div>
<div class="nm" style="left:123px;top:237.5px">Шаг 5 - все</div>
<div class="r" style="top:253px;height:23px"></div>
<div class="nm" style="left:91px;top:260.5px">Заголовки</div>
<div class="r" style="top:276px;height:26px"></div>
<div class="cb" style="top:283px"></div>
<div class="a" style="left:66px;top:280.0px;width:32px;height:19px;border:1px solid #000;background:#fff"><svg width="30" height="17" viewBox="0 0 30 17"><path d="M0 0h4v4H0zM8 0h4v4H8zM4 4h4v4H4zM12 4h2v4h-2zM0 8h4v4H0zM8 8h4v4H8zM4 12h4v4H4zM12 12h2v4h-2z" fill="#ccc"/><rect x="14" y="2" width="15" height="13" fill="#1d8f5a"/><rect x="16" y="3.500" width="5" height="3.500" fill="#e9e4c9"/><rect x="22" y="3.500" width="5.500" height="3.500" fill="#d9e6dc"/><rect x="15.500" y="8.500" width="4" height="3.500" fill="#e0a23a"/><rect x="20.500" y="8" width="8" height="6" fill="#2b3235"/><rect x="16.500" y="9.300" width="2" height="1.600" fill="#fff"/></svg></div>
<div class="nm" style="left:108px;top:285.0px">Layer 13</div>
<div class="r" style="top:302px;height:26px"></div>
<div class="cb" style="top:309px"></div>
<div class="nm" style="left:108px;top:311.0px">Свести звук</div>
<div class="r" style="top:328px;height:26px"></div>
<div class="nm" style="left:108px;top:337.0px">Запись</div>
<div class="r" style="top:354px;height:26px"></div>
<div class="cb" style="top:361px"></div>
<div class="nm" style="left:108px;top:363.0px">Монтаж</div>
<div class="r" style="top:380px;height:26px"></div>
<div class="ec"></div>
<svg class="ov" width="208" height="385" viewBox="0 0 208 385"><defs><linearGradient id="fg" x1="0" y1="0" x2="0" y2="1"><stop offset="0" stop-color="#fafafa"/><stop offset="1" stop-color="#b9b9b9"/></linearGradient></defs><g transform="translate(9,6.5)"><path d="M0 5.200C2 1.500 4.500 0 6.300 0s4.300 1.500 6.300 5.200c-2 3.500-4.500 5-6.300 5S2 8.700 0 5.200z" fill="#d2d2d2"/><path d="M.8 5.200C2.600 2.300 4.600 1.200 6.300 1.200s3.700 1.100 5.500 4" fill="none" stroke="#f4f4f4" stroke-width=".9"/><circle cx="6.300" cy="5" r="3.100" fill="#3a3a3a"/><circle cx="7.300" cy="3.900" r="1.100" fill="#e8e8e8"/></g><path d="M33.700000000000045 9.0h9.600l-4.800 6.500z" fill="#f2f2f2"/><g transform="translate(46,5.0)"><path d="M2 1.800L2.800.600h5l.8 1.200h7V3H2z" fill="#1e1e1e"/><path d="M2 5V2.200l.7-1h4.600l.8 1.300h7.400V5z" fill="#9a9a9a"/><path d="M3 4.800V3.200h11.500v1.600z" fill="#e8e8e8"/><path d="M0 5.500h18l-1.300 7H1.300z" fill="url(#fg)"/></g><path d="M51.799999999999955 29.7v10.600l6.200-5.300z" fill="#f2f2f2"/><g transform="translate(64,28.5)"><path d="M0 2.300h14.200V.700H5.800L5.200 -.400H.400L0 .500z" fill="#1a1a1a"/><path d="M0 1.300h.3L.8.600h4l.5 1.400h8.900V12H0z" fill="url(#fg)"/></g><g transform="translate(9,52.5)"><path d="M0 5.200C2 1.500 4.500 0 6.300 0s4.300 1.500 6.300 5.200c-2 3.500-4.500 5-6.300 5S2 8.700 0 5.200z" fill="#d2d2d2"/><path d="M.8 5.200C2.600 2.300 4.600 1.200 6.300 1.200s3.700 1.100 5.500 4" fill="none" stroke="#f4f4f4" stroke-width=".9"/><circle cx="6.300" cy="5" r="3.100" fill="#3a3a3a"/><circle cx="7.300" cy="3.900" r="1.100" fill="#e8e8e8"/></g><path d="M49.700000000000045 55.0h9.600l-4.800 6.500z" fill="#f2f2f2"/><g transform="translate(62,51.0)"><path d="M2 1.800L2.800.600h5l.8 1.200h7V3H2z" fill="#1e1e1e"/><path d="M2 5V2.200l.7-1h4.600l.8 1.300h7.400V5z" fill="#9a9a9a"/><path d="M3 4.800V3.200h11.500v1.600z" fill="#e8e8e8"/><path d="M0 5.500h18l-1.300 7H1.300z" fill="url(#fg)"/></g><g transform="translate(9,75.5)"><path d="M0 5.200C2 1.500 4.500 0 6.300 0s4.300 1.500 6.300 5.200c-2 3.500-4.500 5-6.300 5S2 8.700 0 5.200z" fill="#d2d2d2"/><path d="M.8 5.200C2.600 2.300 4.600 1.200 6.300 1.200s3.700 1.100 5.500 4" fill="none" stroke="#f4f4f4" stroke-width=".9"/><circle cx="6.300" cy="5" r="3.100" fill="#3a3a3a"/><circle cx="7.300" cy="3.900" r="1.100" fill="#e8e8e8"/></g><path d="M67.79999999999995 75.7v10.600l6.200-5.300z" fill="#f2f2f2"/><g transform="translate(80,74.5)"><path d="M0 2.300h14.200V.700H5.800L5.200 -.400H.400L0 .500z" fill="#1a1a1a"/><path d="M0 1.300h.3L.8.600h4l.5 1.400h8.900V12H0z" fill="url(#fg)"/></g><g transform="translate(9,98.5)"><path d="M0 5.200C2 1.500 4.500 0 6.300 0s4.300 1.500 6.300 5.200c-2 3.500-4.500 5-6.300 5S2 8.700 0 5.200z" fill="#d2d2d2"/><path d="M.8 5.200C2.600 2.300 4.600 1.200 6.300 1.200s3.700 1.100 5.500 4" fill="none" stroke="#f4f4f4" stroke-width=".9"/><circle cx="6.300" cy="5" r="3.100" fill="#3a3a3a"/><circle cx="7.300" cy="3.900" r="1.100" fill="#e8e8e8"/></g><path d="M65.70000000000005 101.0h9.600l-4.800 6.500z" fill="#f2f2f2"/><g transform="translate(78,97.0)"><path d="M2 1.800L2.800.600h5l.8 1.200h7V3H2z" fill="#1e1e1e"/><path d="M2 5V2.200l.7-1h4.600l.8 1.300h7.400V5z" fill="#9a9a9a"/><path d="M3 4.800V3.200h11.500v1.600z" fill="#e8e8e8"/><path d="M0 5.500h18l-1.300 7H1.300z" fill="url(#fg)"/></g><path d="M83.79999999999995 121.7v10.600l6.200-5.300z" fill="#f2f2f2"/><g transform="translate(96,120.5)"><path d="M0 2.300h14.200V.700H5.800L5.200 -.400H.400L0 .500z" fill="#1a1a1a"/><path d="M0 1.300h.3L.8.600h4l.5 1.400h8.900V12H0z" fill="url(#fg)"/></g><path d="M83.79999999999995 144.7v10.600l6.200-5.300z" fill="#f2f2f2"/><g transform="translate(96,143.5)"><path d="M0 2.300h14.200V.700H5.800L5.200 -.400H.400L0 .500z" fill="#1a1a1a"/><path d="M0 1.300h.3L.8.600h4l.5 1.400h8.900V12H0z" fill="url(#fg)"/></g><g transform="translate(9,167.5)"><path d="M0 5.200C2 1.500 4.500 0 6.300 0s4.300 1.500 6.300 5.200c-2 3.500-4.500 5-6.300 5S2 8.700 0 5.200z" fill="#d2d2d2"/><path d="M.8 5.200C2.600 2.300 4.600 1.200 6.300 1.200s3.700 1.100 5.500 4" fill="none" stroke="#f4f4f4" stroke-width=".9"/><circle cx="6.300" cy="5" r="3.100" fill="#3a3a3a"/><circle cx="7.300" cy="3.900" r="1.100" fill="#e8e8e8"/></g><path d="M83.79999999999995 167.7v10.600l6.200-5.300z" fill="#f2f2f2"/><g transform="translate(96,166.5)"><path d="M0 2.300h14.200V.700H5.800L5.200 -.400H.400L0 .500z" fill="#1a1a1a"/><path d="M0 1.300h.3L.8.600h4l.5 1.400h8.900V12H0z" fill="url(#fg)"/></g><path d="M83.79999999999995 190.7v10.600l6.200-5.300z" fill="#f2f2f2"/><g transform="translate(96,189.5)"><path d="M0 2.300h14.200V.700H5.800L5.200 -.400H.400L0 .500z" fill="#1a1a1a"/><path d="M0 1.300h.3L.8.600h4l.5 1.400h8.900V12H0z" fill="url(#fg)"/></g><path d="M83.79999999999995 213.7v10.600l6.200-5.300z" fill="#f2f2f2"/><g transform="translate(96,212.5)"><path d="M0 2.300h14.200V.700H5.800L5.200 -.400H.400L0 .500z" fill="#1a1a1a"/><path d="M0 1.300h.3L.8.600h4l.5 1.400h8.900V12H0z" fill="url(#fg)"/></g><path d="M83.79999999999995 236.7v10.600l6.200-5.300z" fill="#f2f2f2"/><g transform="translate(96,235.5)"><path d="M0 2.300h14.200V.700H5.800L5.200 -.400H.400L0 .500z" fill="#1a1a1a"/><path d="M0 1.300h.3L.8.600h4l.5 1.400h8.900V12H0z" fill="url(#fg)"/></g><g transform="translate(9,259.5)"><path d="M0 5.200C2 1.500 4.500 0 6.300 0s4.300 1.500 6.300 5.200c-2 3.500-4.500 5-6.300 5S2 8.700 0 5.200z" fill="#d2d2d2"/><path d="M.8 5.200C2.600 2.300 4.600 1.200 6.300 1.200s3.700 1.100 5.500 4" fill="none" stroke="#f4f4f4" stroke-width=".9"/><circle cx="6.300" cy="5" r="3.100" fill="#3a3a3a"/><circle cx="7.300" cy="3.900" r="1.100" fill="#e8e8e8"/></g><path d="M49.700000000000045 262.0h9.600l-4.800 6.500z" fill="#f2f2f2"/><g transform="translate(62,258.0)"><path d="M2 1.800L2.800.600h5l.8 1.200h7V3H2z" fill="#1e1e1e"/><path d="M2 5V2.200l.7-1h4.600l.8 1.300h7.400V5z" fill="#9a9a9a"/><path d="M3 4.800V3.200h11.500v1.600z" fill="#e8e8e8"/><path d="M0 5.500h18l-1.300 7H1.300z" fill="url(#fg)"/></g><text x="75.20000000000005" y="320.4" font-family="Liberation Serif,serif" font-size="16.500" fill="#e4e4e4">T</text><g transform="translate(9,336.0)"><path d="M0 5.200C2 1.500 4.500 0 6.300 0s4.300 1.500 6.300 5.200c-2 3.500-4.500 5-6.300 5S2 8.700 0 5.200z" fill="#d2d2d2"/><path d="M.8 5.200C2.600 2.300 4.600 1.200 6.300 1.200s3.700 1.100 5.500 4" fill="none" stroke="#f4f4f4" stroke-width=".9"/><circle cx="6.300" cy="5" r="3.100" fill="#3a3a3a"/><circle cx="7.300" cy="3.900" r="1.100" fill="#e8e8e8"/></g><text x="75.20000000000005" y="346.4" font-family="Liberation Serif,serif" font-size="16.500" fill="#e4e4e4">T</text><text x="75.20000000000005" y="372.4" font-family="Liberation Serif,serif" font-size="16.500" fill="#e4e4e4">T</text></svg>
</div>
<div id="lsb"><i></i></div>
<svg class="ov" width="223" height="300" viewBox="1143 0 223 300">
<defs><linearGradient id="pg" x1="0" y1="0" x2="0" y2="1"><stop offset="0" stop-color="#f0f0f0"/><stop offset="1" stop-color="#b8b8b8"/></linearGradient><linearGradient id="tg" x1="0" y1="0" x2="0" y2="1"><stop offset="0" stop-color="#cdcdcd"/><stop offset="1" stop-color="#868686"/></linearGradient></defs>
<path d="M1354 3.500v5.600l3.400-2.800zM1358 3.500v5.600l3.400-2.800z" fill="#d6d6d6"/>
<!-- panel menus -->
<path d="M1347 20.500h5.500l-2.750 3z" fill="#d0d0d0"/><path d="M1354 19.500h7.500M1354 21.500h7.500M1354 23.500h7.500M1354 25.500h7.500" stroke="#cfcfcf" stroke-width=".9"/>
<path d="M1347 183.500h5.500l-2.750 3z" fill="#d0d0d0"/><path d="M1354 182.500h7.500M1354 184.500h7.500M1354 186.500h7.500M1354 188.500h7.500" stroke="#cfcfcf" stroke-width=".9"/>
<!-- zoom out / slider / zoom in -->
<path d="M1207 167.500l2.800-3 1.500 1.600 1.400-2.300 3.300 3.700z" fill="#9a9a9a" stroke="#eee" stroke-width=".8"/><path d="M1206.500 167.700h10" stroke="#f4f4f4" stroke-width="1"/>
<path d="M1265.300 170.300v-4.300l4.450-4.600 4.450 4.600v4.300z" fill="url(#tg)" stroke="#6a6a6a" stroke-width=".5"/>
<path d="M1324.500 167.500l5.500-6 3 3.200 2.700-4.200 6.300 7z" fill="#8a8a8a" stroke="#f0f0f0" stroke-width="1" stroke-linejoin="miter"/><path d="M1330 161.500l3.500 4" stroke="#f0f0f0" stroke-width="1"/><path d="M1324 167.500h18.500" stroke="#fff" stroke-width="1.200"/>
<path d="M1364 163v10h-10z" fill="none"/><path d="M1362.5 163.5v.1M1362.5 165.5v.1M1362.5 167.5v.1M1362.5 169.5v.1M1362.5 171.5v.1M1360.5 165.5v.1M1360.5 167.5v.1M1360.5 169.5v.1M1360.5 171.5v.1M1358.5 167.5v.1M1358.5 169.5v.1M1358.5 171.5v.1M1356.5 169.5v.1M1356.5 171.5v.1M1354.5 171.5v.1" stroke="#2e2e2e" stroke-width="1" stroke-linecap="square"/>
<!-- kind: magnifier, arrows -->
<circle cx="1160.200" cy="205.700" r="3.500" fill="none" stroke="#e2e2e2" stroke-width="1.400"/><path d="M1157.800 208.300l-2.600 2.800" stroke="#e2e2e2" stroke-width="1.900" stroke-linecap="round"/>
<path d="M1207 205.500h5.600l-2.800-3.600zM1207 207.700h5.600l-2.800 3.600z" fill="#f2f2f2"/>
<path d="M1248 234h5.600l-2.800-3.600zM1248 236.200h5.600l-2.800 3.600z" fill="#f2f2f2"/>
<!-- filter icons -->
<rect x="1229.600" y="201.100" width="12" height="10.300" fill="none" stroke="#e0e0e0" stroke-width="1.200"/><path d="M1231 210l2.500-3.500 2 2.300 1.500-1.500 3.200 2.700z" fill="#d0d0d0"/><circle cx="1239" cy="204" r="1" fill="#e0e0e0"/>
<circle cx="1258.500" cy="206.500" r="5" fill="#6a6a6a" stroke="#dcdcdc" stroke-width="1.200"/><path d="M1255 210a5 5 0 0 1 7-7z" fill="#dcdcdc"/>
<text x="1276.500" y="212" font-family="Liberation Serif,serif" font-size="16.500" font-weight="bold" fill="#e4e4e4">T</text>
<rect x="1302.500" y="201.500" width="9" height="9" fill="none" stroke="#e0e0e0" stroke-width="1.100"/><path d="M1301 200h3v3h-3zM1310 200h3v3h-3zM1301 209h3v3h-3zM1310 209h3v3h-3z" fill="#4e4e4e" stroke="#e6e6e6" stroke-width=".9"/>
<path d="M1328.500 200.500h6l2.500 2.500v8.500h-8.500z" fill="#5a5a5a" stroke="#e0e0e0" stroke-width="1.100"/><path d="M1334.500 200.500v2.500h2.500" fill="none" stroke="#e0e0e0" stroke-width="1"/><rect x="1325.500" y="206" width="6" height="6" fill="#d8d8d8"/>
<rect x="1351.500" y="198.500" width="9" height="17" rx="1" fill="#3c3c3c" stroke="#2e2e2e" stroke-width="1"/><rect x="1352.500" y="199.500" width="7" height="7" fill="#8c8c8c"/>
<!-- opacity / fill arrows -->
<path d="M1349.500 233.500h5.600l-2.800 3.200z" fill="#f2f2f2"/><path d="M1349.500 261.500h5.600l-2.800 3.200z" fill="#f2f2f2"/>
<!-- lock icons -->
<rect x="1182" y="257" width="11" height="11" fill="#8a8a8a"/><path d="M1182 257h3.700v3.700h-3.700zM1189.300 257h3.700v3.700h-3.700zM1185.700 260.700h3.600v3.600h-3.600zM1182 264.300h3.700v3.700h-3.700zM1189.300 264.300h3.700v3.700h-3.700z" fill="#6c6c6c"/>
<path d="M1217.500 255.500l-7 8" stroke="#8e8e8e" stroke-width="1.700" stroke-linecap="round"/><path d="M1202.500 267.500c2.500-.3 4-2.300 5.500-3.700l2.500 2.500c-.8 2.600-5.400 3.200-8 1.200z" fill="#8e8e8e"/>
<path d="M1231.500 256v13M1225 262.500h13" stroke="#8e8e8e" stroke-width="1.200"/><path d="M1229.300 258.300l2.200-2.600 2.200 2.600zM1229.300 266.700l2.200 2.600 2.200-2.600zM1227.300 260.300l-2.600 2.200 2.600 2.200zM1235.700 260.300l2.600 2.200-2.600 2.200z" fill="#8e8e8e"/>
<path d="M1251.500 262v-3a2.700 2.700 0 0 1 5.400 0v3" fill="none" stroke="#dcdcdc" stroke-width="1.500"/><rect x="1249.500" y="261.500" width="9.500" height="7.500" rx="1" fill="#dcdcdc"/><path d="M1254.250 264v2.500" stroke="#444" stroke-width="1.300"/>
<!-- scrollbar arrow -->
<path d="M1354.700 288.300l3.400-3.800 3.400 3.800z" fill="#f4f4f4"/>
</svg>
</div>
</body>
</html>
